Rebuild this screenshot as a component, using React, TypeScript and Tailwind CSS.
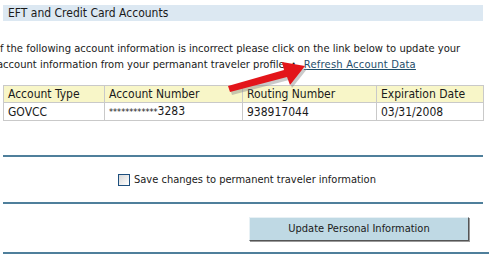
export default function App() {
  const cols = [
    { head: "Account Type", value: "GOVCC", w: "w-[101px]" },
    { head: "Account Number", value: "************3283", w: "w-[138px]" },
    { head: "Routing Number", value: "938917044", w: "w-[134px]" },
    { head: "Expiration Date", value: "03/31/2008", w: "w-[107px]" },
  ];

  return (
    <div className="relative w-[496px] h-[261px] overflow-hidden bg-white text-[#1a1a1a] font-['DejaVu_Sans_Condensed','DejaVu_Sans',sans-serif]">
      {/* section header */}
      <div className="ml-[3px] mt-[5px] w-[480px] h-[16px] bg-[#dce8f2] pl-[5px] text-[12px] leading-[16px]">
        EFT and Credit Card Accounts
      </div>

      <p className="ml-[-3px] mt-[20px] text-[11.1px] leading-[16px] whitespace-nowrap">
        If the following account information is incorrect please click on the link below to update your
        <br />
        account information from your permanant traveler profile
        <span className="text-[8px] align-middle pl-[7px] pr-[8px]">•</span>
        <a href="#" className="text-[#1f4e6b] underline decoration-[#1f4e6b] tracking-[0.2px]">Refresh Account Data</a>
      </p>

      <table className="ml-[3px] mt-[12px] border-collapse text-[12px] leading-[16px]">
        <thead>
          <tr className="bg-[#f8f6c8]">
            {cols.map(c => (
              <th key={c.head} className={`${c.w} border border-[#c9c9c9] px-[4px] text-left font-normal`}>
                {c.head}
              </th>
            ))}
          </tr>
        </thead>
        <tbody>
          <tr>
            {cols.map(c => (
              <td key={c.head} className="border border-[#c9c9c9] px-[4px]">
                {c.head === "Account Number" ? (
                  <span><span className="text-[9px]">************</span>3283</span>
                ) : c.value}
              </td>
            ))}
          </tr>
        </tbody>
      </table>

      <div className="ml-[3px] mt-[34px] w-[480px] border-t-2 border-[#4f7f9b]" />

      <div className="mt-[16px] ml-[118px] flex items-center gap-[4px] h-[14px]">
        <span className="w-[12px] h-[12px] border border-[#1d4f7e] bg-gradient-to-br from-[#d8d8d8] to-white" />
        <span className="text-[11px] leading-[14px]">Save changes to permanent traveler information</span>
      </div>

      <div className="ml-[3px] mt-[15px] w-[480px] border-t-2 border-[#4f7f9b]" />

      <div className="mt-[11px] ml-[249px]">
        <button className="w-[220px] h-[24px] bg-[#bfd9e4] border border-t-[#e8f1f5] border-l-[#e8f1f5] border-b-[#555] border-r-[#555] text-[11px] text-[#1a1a1a] shadow-[1px_1px_0_#9a9a9a]">
          Update Personal Information
        </button>
      </div>

      <div className="ml-[3px] mt-[11px] w-[486px] border-t-2 border-[#4f7f9b]" />

      {/* red pointer arrow */}
      <svg className="absolute left-[224px] top-[56px]" width="90" height="40" viewBox="0 0 90 40">
        <g transform="translate(2,3)" fill="#8a8a8a" opacity="0.45">
          <polygon points="4,30 60,14 58,6 81,10 66,29 63,21 6,36" />
        </g>
        <polygon points="4,30 60,14 58,6 81,10 66,29 63,21 6,36" fill="#e3151a" />
      </svg>
    </div>
  );
}
